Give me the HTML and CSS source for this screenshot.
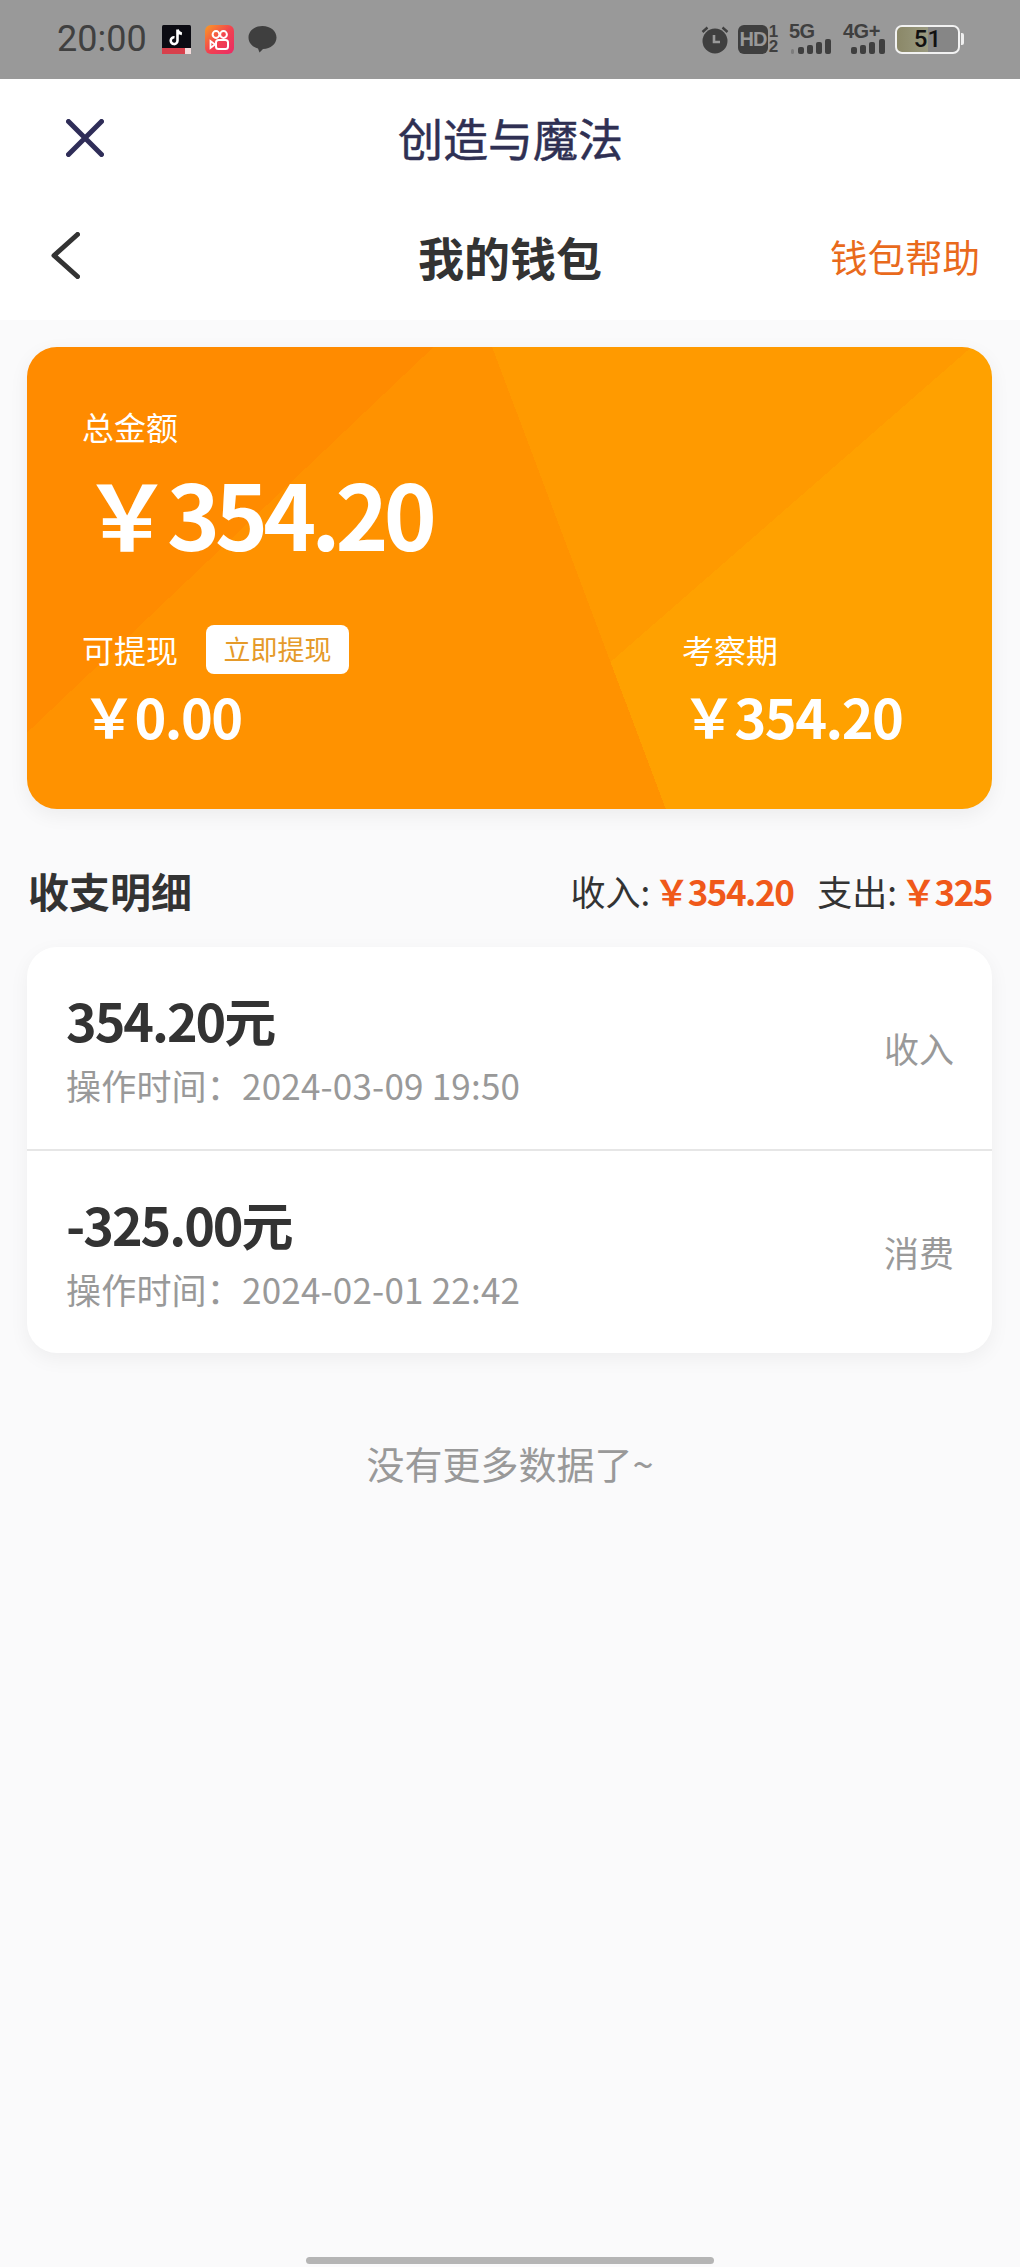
FILE: index.html
```html
<!DOCTYPE html>
<html lang="zh-CN">
<head>
    <meta charset="UTF-8">
    <meta name="viewport" content="width=device-width, initial-scale=1.0">
    <title>我的钱包</title>
    <link rel="stylesheet" href="styles.css">
</head>
<body>
    <div class="page">
        <!-- status bar -->
        <div class="status-bar">
            <div class="status-left">
                <span class="time">20:00</span>
                <svg class="app-icon" width="29" height="29" viewBox="0 0 29 29">
                    <rect width="29" height="29" rx="1.5" fill="#0b0b12"/>
                    <rect y="23" width="29" height="6" fill="#d8404c"/>
                    <rect x="23" y="23" width="6" height="6" fill="#f4dcdc"/>
                    <path d="M15.5 4.5v11.2a3.4 3.4 0 1 1-3-3.4M15.5 4.5c.4 2.6 2 4 4.4 4.4" fill="none" stroke="#fff" stroke-width="2.6"/>
                </svg>
                <svg class="app-icon" width="29" height="29" viewBox="0 0 29 29">
                    <defs>
                        <linearGradient id="ks" x1="0" y1="0" x2="1" y2="1">
                            <stop offset="0" stop-color="#fb9c22"/>
                            <stop offset="0.5" stop-color="#f2434f"/>
                            <stop offset="1" stop-color="#ea2a66"/>
                        </linearGradient>
                    </defs>
                    <rect width="29" height="29" rx="6" fill="url(#ks)"/>
                    <circle cx="11" cy="9.5" r="3.4" fill="none" stroke="#fff" stroke-width="2"/>
                    <circle cx="18.5" cy="9.5" r="3.4" fill="none" stroke="#fff" stroke-width="2"/>
                    <rect x="11" y="15" width="12" height="9" rx="2.5" fill="none" stroke="#fff" stroke-width="2"/>
                    <path d="M10 19.5 5.500 16v7z" fill="none" stroke="#fff" stroke-width="1.800"/>
                </svg>
                <svg class="bubble" width="29" height="29" viewBox="0 0 29 29">
                    <path d="M14.500 1C6.500 1 .5 6 .5 12.500c0 5.500 4.300 9.800 9.500 11l1.500 4 3.500-3.600C22.500 24 28.500 19 28.500 12.500 28.500 6 22.500 1 14.500 1z" fill="#3f3f3f"/>
                </svg>
            </div>
            <div class="status-right">
                <svg width="28" height="29" viewBox="0 0 28 29">
                    <circle cx="14" cy="16" r="12.500" fill="#3f3f3f"/>
                    <path d="M13 10v7h6" fill="none" stroke="#999" stroke-width="2.600"/>
                    <path d="M1.500 7l5-4.500M26.500 7l-5-4.500" stroke="#3f3f3f" stroke-width="2.400"/>
                </svg>
                <span class="hd">HD</span>
                <span class="sim"><span>1</span><span>2</span></span>
                <span class="net net-5g">
                    <span class="net-label">5G</span>
                    <svg width="42" height="15" viewBox="0 0 42 15">
                        <rect x="2" y="10" width="3" height="5" rx="1.500" fill="#7d7d7d"/>
                        <rect x="9" y="8" width="6" height="7" rx="2" fill="#3f3f3f"/>
                        <rect x="18" y="6" width="6" height="9" rx="2" fill="#3f3f3f"/>
                        <rect x="27" y="3" width="6" height="12" rx="2" fill="#3f3f3f"/>
                        <rect x="36" y="0" width="6" height="15" rx="2" fill="#3f3f3f"/>
                    </svg>
                </span>
                <span class="net net-4g">
                    <span class="net-label">4G+</span>
                    <svg width="42" height="15" viewBox="0 0 42 15">
                        <rect x="8" y="8" width="6" height="7" rx="2" fill="#3f3f3f"/>
                        <rect x="17" y="6" width="6" height="9" rx="2" fill="#3f3f3f"/>
                        <rect x="26" y="3" width="6" height="12" rx="2" fill="#3f3f3f"/>
                        <rect x="36" y="0" width="6" height="15" rx="2" fill="#3f3f3f"/>
                    </svg>
                </span>
                <span class="battery">
                    <span class="battery-body"><span class="battery-text">51</span></span>
                    <span class="battery-nub"></span>
                </span>
            </div>
        </div>

        <!-- header -->
        <div class="top-bar">
            <svg class="close-icon" width="38" height="38" viewBox="0 0 38 38">
                <path d="M2.500 2.500l33 33M35.500 2.500l-33 33" fill="none" stroke="#2f2d58" stroke-width="5" stroke-linecap="round"/>
            </svg>
            <span class="top-title">创造与魔法</span>
        </div>
        <div class="nav-bar">
            <svg class="back-icon" width="29" height="47" viewBox="0 0 29 47">
                <path d="M26.500 2.500 3 23.500l23.500 21" fill="none" stroke="#333" stroke-width="5" stroke-linecap="round" stroke-linejoin="round"/>
            </svg>
            <span class="nav-title">我的钱包</span>
            <span class="nav-help">钱包帮助</span>
        </div>

        <!-- wallet card -->
        <div class="wallet-card">
            <div class="wallet-label">总金额</div>
            <div class="wallet-total">￥354.20</div>
            <div class="wallet-bottom">
                <div class="wallet-col">
                    <div class="wallet-row">
                        <span class="wallet-label">可提现</span>
                        <span class="withdraw-btn">立即提现</span>
                    </div>
                    <div class="wallet-value">￥0.00</div>
                </div>
                <div class="wallet-col">
                    <div class="wallet-row">
                        <span class="wallet-label">考察期</span>
                    </div>
                    <div class="wallet-value">￥354.20</div>
                </div>
            </div>
        </div>

        <!-- detail -->
        <div class="detail-head">
            <span class="detail-title">收支明细</span>
            <span class="detail-sum">
                <span>收入:<b>￥354.20</b></span>
                <span>支出:<b>￥325</b></span>
            </span>
        </div>
        <div class="detail-list">
            <div class="detail-item">
                <div class="item-main">
                    <div class="item-money">354.20元</div>
                    <div class="item-time">操作时间：2024-03-09 19:50</div>
                </div>
                <span class="item-type">收入</span>
            </div>
            <div class="detail-item">
                <div class="item-main">
                    <div class="item-money">-325.00元</div>
                    <div class="item-time">操作时间：2024-02-01 22:42</div>
                </div>
                <span class="item-type">消费</span>
            </div>
        </div>
        <p class="no-more">没有更多数据了~</p>

        <div class="home-bar"></div>
    </div>
</body>
</html>
```

FILE: styles.css
```css
* {
    box-sizing: border-box;
}
html, body {
    margin: 0;
    padding: 0;
}
body {
    font-family: "Noto Sans CJK SC", "Noto Sans", sans-serif;
    background: #fafafb;
    color: #333;
}
.page {
    width: 1020px;
    height: 2267px;
    display: flex;
    flex-direction: column;
    overflow: hidden;
}

/* status bar */
.status-bar {
    height: 79px;
    background: #999;
    display: flex;
    justify-content: space-between;
    align-items: center;
    padding: 0 56px 1px 57px;
}
.status-left {
    display: flex;
    align-items: center;
}
.time {
    font-family: Roboto, sans-serif;
    font-size: 36px;
    color: #404040;
    width: 105px;
}
.app-icon {
    margin-right: 14px;
}
.status-right {
    display: flex;
    align-items: center;
    color: #3f3f3f;
}
.hd {
    width: 30px;
    height: 29px;
    margin-left: 9px;
    background: #3f3f3f;
    border-radius: 6px;
    color: #999;
    font: bold 20px/29px "Liberation Sans", sans-serif;
    letter-spacing: -1px;
    text-align: center;
}
.sim {
    display: flex;
    flex-direction: column;
    width: 11px;
    font: bold 17px/15px "Liberation Sans", sans-serif;
    text-align: center;
}
.net {
    display: flex;
    flex-direction: column;
    width: 42px;
}
.net-5g {
    margin-left: 10px;
}
.net-4g {
    margin-left: 12px;
}
.net-label {
    font: bold 20px/15px "Liberation Sans", sans-serif;
    letter-spacing: -0.5px;
}
.battery {
    display: flex;
    align-items: center;
    margin-left: 10px;
}
.battery-body {
    width: 65px;
    height: 29px;
    border: 2px solid #f2f2f2;
    border-radius: 7px;
    background: linear-gradient(90deg, #8b8868 0, #9a9a80 51%, #868686 51%);
    display: flex;
    align-items: center;
    justify-content: center;
}
.battery-text {
    font: 500 24px/25px Roboto, sans-serif;
    color: #111;
}
.battery-nub {
    width: 3px;
    height: 12px;
    margin-left: 1px;
    background: #efefef;
    border-radius: 0 2px 2px 0;
}

/* header */
.top-bar {
    height: 118px;
    background: #fff;
    display: flex;
    align-items: center;
    padding: 0 0 1px 66px;
}
.close-icon {
    flex: none;
}
.top-title {
    margin-left: 294px;
    font-size: 45px;
    line-height: 60px;
    color: #2f3053;
    -webkit-text-stroke: 0.5px #2f3053;
}
.nav-bar {
    height: 123px;
    background: #fff;
    display: flex;
    align-items: center;
    padding: 0 40px 6px 51px;
    margin-bottom: 27px;
}
.back-icon {
    flex: none;
}
.nav-title {
    margin-left: 338px;
    font-size: 46px;
    font-weight: 700;
    line-height: 60px;
}
.nav-help {
    margin-left: auto;
    font-size: 37.500px;
    color: #e96a1c;
}

/* wallet card */
.wallet-card {
    width: 965px;
    height: 462px;
    margin-left: 27px;
    padding: 55px 55px 0;
    border-radius: 30px;
    color: #fff;
    box-shadow: 0 6px 20px rgba(0, 0, 0, 0.06);
    background:
        linear-gradient(316.5deg, transparent 72%, #ff8b00 72%),
        linear-gradient(69.4deg, #ff9200 56.1%, transparent 56.1%),
        linear-gradient(138.9deg, transparent 63.2%, #ffa100 63.2%),
        #ff9a00;
}
.wallet-label {
    font-size: 32px;
    line-height: 48px;
}
.wallet-total {
    height: 110px;
    margin-top: 7px;
    font-size: 90px;
    font-weight: 700;
    line-height: 110px;
    letter-spacing: -5px;
}
.wallet-bottom {
    display: flex;
    margin-top: 57px;
}
.wallet-col {
    flex: none;
    width: 600px;
}
.wallet-row {
    display: flex;
    align-items: center;
    height: 50px;
}
.withdraw-btn {
    width: 143px;
    height: 49px;
    margin-left: 28px;
    background: #fff;
    border-radius: 8px;
    color: #e59a2a;
    font-size: 27px;
    line-height: 47px;
    text-align: center;
}
.wallet-value {
    font-size: 54px;
    font-weight: 700;
    line-height: 72px;
    margin-top: 6px;
    letter-spacing: -1.500px;
}

/* detail */
.detail-head {
    display: flex;
    justify-content: space-between;
    align-items: center;
    height: 60px;
    margin: 51px 28px 27px;
}
.detail-title {
    font-size: 41px;
    font-weight: 700;
}
.detail-sum {
    display: flex;
    gap: 24px;
    font-size: 35px;
}
.detail-sum b {
    margin-left: 4px;
    color: #f0591a;
    letter-spacing: -1.500px;
}
.detail-list {
    width: 965px;
    margin-left: 27px;
    background: #fff;
    border-radius: 30px;
    box-shadow: 0 6px 20px rgba(0, 0, 0, 0.05);
}
.detail-item {
    display: flex;
    justify-content: space-between;
    align-items: center;
    height: 202px;
    padding: 0 38px 0 39px;
}
.detail-item + .detail-item {
    height: 204px;
    border-top: 2px solid #e6e6e6;
}
.item-main {
    padding-top: 7px;
}
.item-money {
    font-size: 52px;
    font-weight: 700;
    line-height: 62px;
    letter-spacing: -2px;
    margin-top: 1px;
}
.item-time {
    font-size: 35px;
    line-height: 62px;
    letter-spacing: 0.2px;
    color: #999;
    margin-top: 3px;
}
.item-type {
    font-size: 35px;
    color: #999;
    padding-bottom: 2px;
}
.no-more {
    margin: 83px 0 0;
    font-size: 38px;
    line-height: 54px;
    color: #999;
    text-align: center;
}
.home-bar {
    width: 408px;
    height: 7px;
    margin: auto auto 3px;
    background: #b5b5b5;
    border-radius: 4px;
}
```
